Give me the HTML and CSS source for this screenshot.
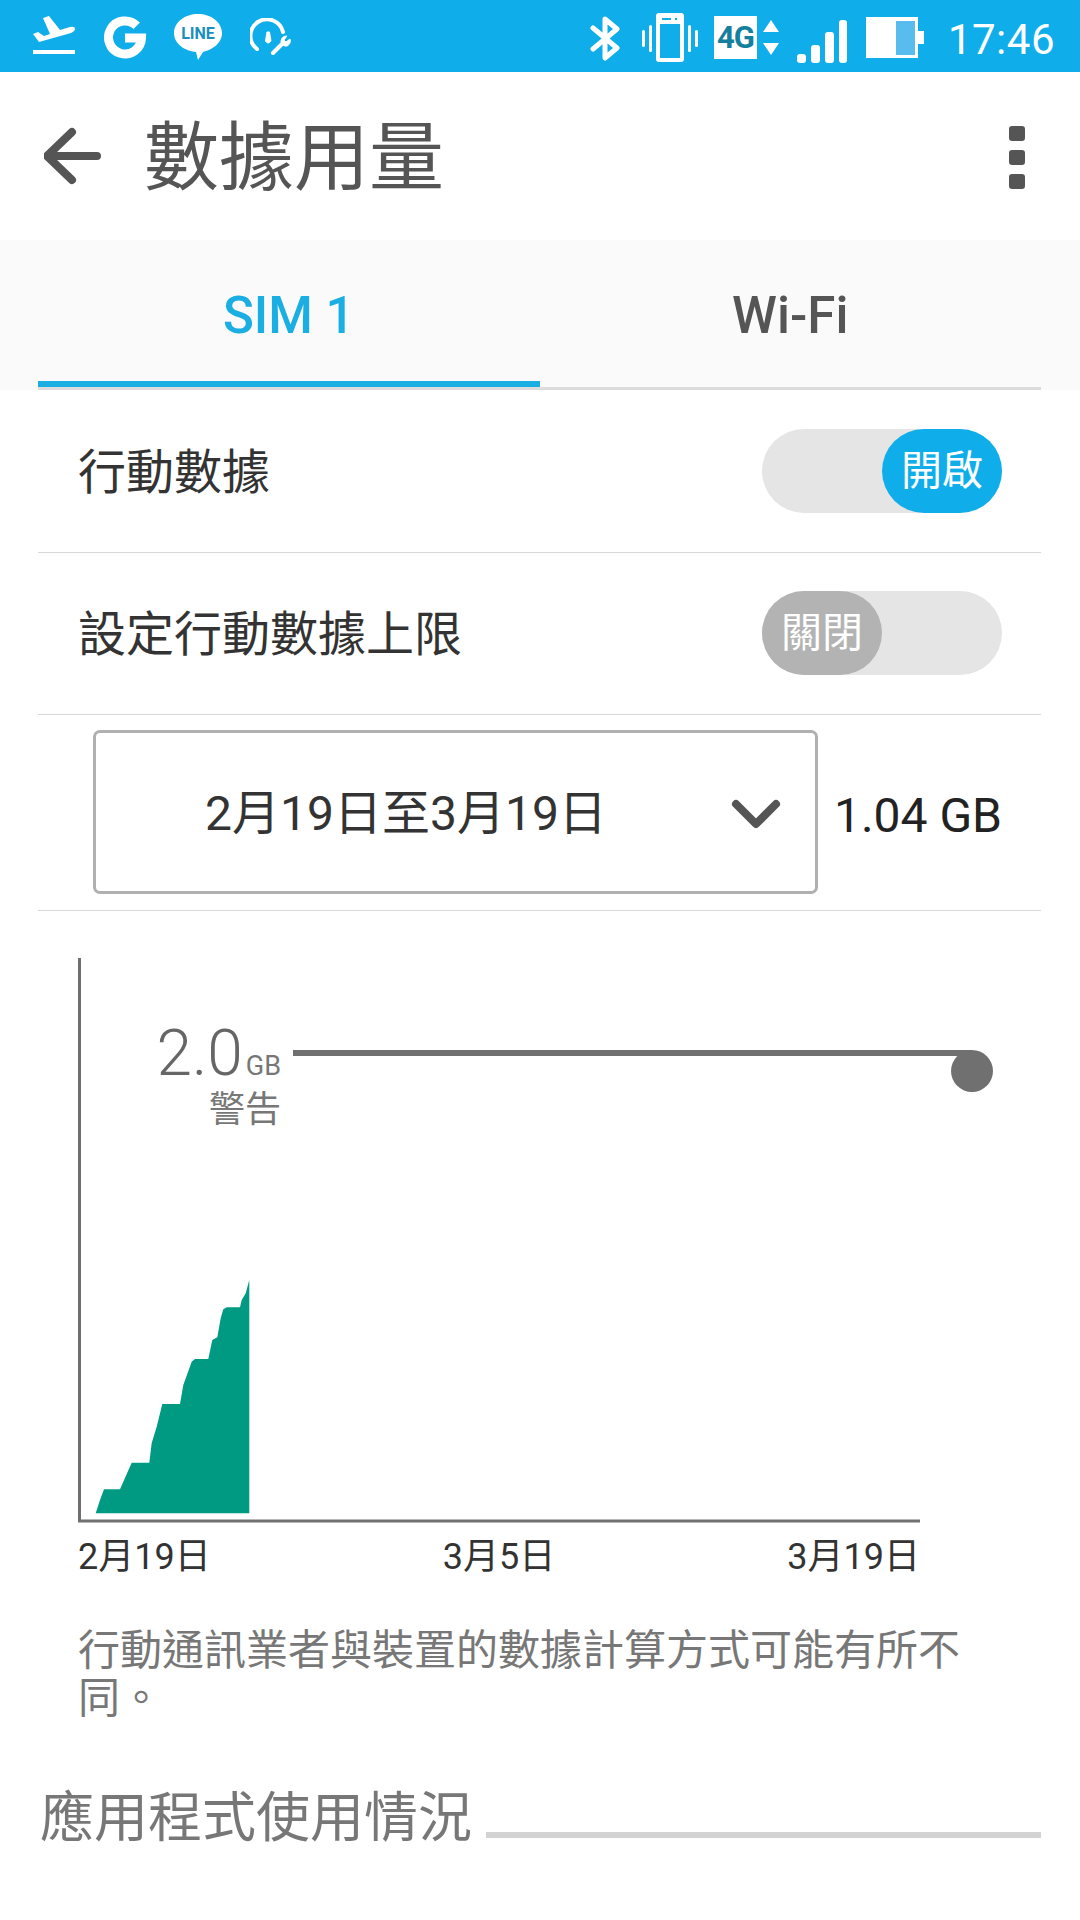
FILE: index.html
```html
<!DOCTYPE html>
<html>
<head>
    <title>數據用量</title>
    <link rel="stylesheet" href="styles.css">
</head>
<body>
    <div class="status-bar">
        <div class="status-left">
            <!-- airplane -->
            <svg class="ic-plane" viewBox="33 14 42 42" fill="#fff">
                <path d="M33 34 L38 32 L44 36 L50 34 L43 18 L49 16 L60 30 L70 27 Q75 26 75 29 Q75 31 71 33 L39 42 Z"/>
                <rect x="33" y="50" width="42" height="4"/>
            </svg>
            <!-- google G -->
            <svg class="ic-g" viewBox="105 15 43 44">
                <path d="M137.700 25.800 A16.500 16.500 0 1 0 142.500 38 H126" fill="none" stroke="#fff" stroke-width="9"/>
            </svg>
            <!-- line bubble -->
            <svg class="ic-line" viewBox="174 14 48 47">
                <path d="M198 14 C211 14 222 22 222 33 C222 44 211 50 203 52 L198 60 L196 52 C185 51 174 44 174 33 C174 22 185 14 198 14 Z" fill="#fff"/>
                <text x="198" y="39" text-anchor="middle" class="line-word">LINE</text>
            </svg>
            <!-- gauge with wrench -->
            <svg class="ic-gauge" viewBox="250 18 41 38" fill="none" stroke="#fff">
                <path d="M257 49 A16.500 16.500 0 1 1 283 32" stroke-width="4" stroke-linecap="round"/>
                <path d="M265.500 41 L267 32 L269.500 32 L271 41 Q268 45 265.500 41 Z" fill="#fff" stroke-width="1"/>
                <path d="M273 53 L283 43" stroke-width="4" stroke-linecap="round"/>
                <path d="M281 41 A5 5 0 0 0 287 46 A6 6 0 0 0 290 39 L286 42 L284 40 L287 36 A6 6 0 0 0 281 41 Z" fill="#fff" stroke-width="1"/>
            </svg>
        </div>
        <div class="status-right">
            <!-- bluetooth -->
            <svg class="ic-bt" viewBox="592 16 30 45" fill="none" stroke="#fff" stroke-width="5">
                <path d="M595 28 L619 48 L607 58 V19 L619 29 L595 49" stroke-linejoin="round" stroke-linecap="round"/>
            </svg>
            <!-- vibrate -->
            <svg class="ic-vib" viewBox="643 13 57 49" fill="#fff">
                <path fill-rule="evenodd" d="M660 13 H682 Q685 13 685 16 V59 Q685 62 682 62 H660 Q657 62 657 59 V16 Q657 13 660 13 Z M661 24 V58 H681 V24 Z"/>
                <rect x="663" y="18" width="9" height="2" fill="#0faeeb"/>
                <rect x="676" y="18" width="2" height="2" fill="#0faeeb"/>
                <rect x="643" y="30" width="3" height="17" rx="1.500"/>
                <rect x="650" y="25" width="3" height="27" rx="1.500"/>
                <rect x="689" y="25" width="3" height="27" rx="1.500"/>
                <rect x="696" y="30" width="3" height="17" rx="1.500"/>
            </svg>
            <div class="net-box">4G</div>
            <svg class="ic-arrows" viewBox="763 19 19 38" fill="#fff">
                <path d="M772 20 L780 32 H764 Z M764 43 H780 L772 55 Z"/>
            </svg>
            <svg class="ic-signal" viewBox="798 19 50 44" fill="#fff">
                <rect x="798" y="54" width="9" height="9" rx="3"/>
                <rect x="812" y="45" width="9" height="18" rx="3"/>
                <rect x="826" y="32" width="9" height="31" rx="3"/>
                <rect x="840" y="20" width="8" height="43" rx="3"/>
            </svg>
            <svg class="ic-batt" viewBox="867 17 59 42" fill="#fff">
                <path d="M867 17 H919 V31 H925 V44 H919 V58 H867 Z"/>
                <rect x="897" y="21" width="19" height="34" fill="#58bdee"/>
            </svg>
            <span class="clock">17:46</span>
        </div>
    </div>

    <div class="toolbar">
        <svg class="back" viewBox="0 0 58 60" fill="none" stroke="#555" stroke-width="8" stroke-linecap="round" stroke-linejoin="round">
            <path d="M28 5 L3 29 L28 53 M3 29 H53"/>
        </svg>
        <div class="title">數據用量</div>
        <div class="menu">
            <span></span>
            <span></span>
            <span></span>
        </div>
    </div>

    <div class="tabs">
        <div class="tab active">SIM 1</div>
        <div class="tab">Wi-Fi</div>
    </div>

    <div class="list">
        <div class="row">
            <span class="label">行動數據</span>
            <div class="toggle on"><span class="knob">開啟</span></div>
        </div>
        <div class="row">
            <span class="label">設定行動數據上限</span>
            <div class="toggle"><span class="knob">關閉</span></div>
        </div>
        <div class="row date-row">
            <div class="select">
                <span class="range">2月19日至3月19日</span>
                <svg class="chevron" viewBox="0 0 50 30" fill="none" stroke="#555" stroke-width="8" stroke-linecap="round" stroke-linejoin="round">
                    <path d="M5 5 L25 25 L45 5"/>
                </svg>
            </div>
            <span class="total">1.04 GB</span>
        </div>
    </div>

    <div class="chart">
        <svg class="plot" viewBox="0 -2 1080 640">
            <path d="M95.700 553.300 L100 540 L104 529.300 H120 L131.700 502.700 H149.300 L151.700 483 L156.700 466.700 L162.300 444 H180 L183.300 425 L191.700 401.700 L195 399 H208.300 L212.300 380 L217.300 377.300 L220.700 358.300 L223.300 349.300 L226.700 347.300 H240 L241.700 340 L245.700 333.300 L249.300 320 V553.300 Z" fill="#009a83"/>
            <path d="M79.500 -2 V561 H920" fill="none" stroke="#707070" stroke-width="3"/>
            <rect x="293" y="90" width="679" height="6" fill="#707070"/>
            <circle cx="972" cy="111" r="21" fill="#707070"/>
        </svg>
        <div class="limit">
            <div><span class="limit-num">2.0</span><span class="limit-unit">GB</span></div>
            <div class="limit-word">警告</div>
        </div>
        <div class="dates">
            <span>2月19日</span>
            <span>3月5日</span>
            <span>3月19日</span>
        </div>
    </div>

    <p class="note">行動通訊業者與裝置的數據計算方式可能有所不同。</p>

    <div class="section">
        <span>應用程式使用情況</span>
        <div class="section-line"></div>
    </div>
</body>
</html>
```

FILE: styles.css
```css
* {
    box-sizing: border-box;
}
body {
    margin: 0;
    width: 1080px;
    height: 1920px;
    overflow: hidden;
    background-color: #fff;
    font-family: Roboto, "Noto Sans CJK TC", sans-serif;
    color: #333;
}
svg {
    display: block;
    flex: none;
}

/* status bar */
.status-bar {
    height: 72px;
    background-color: #0faeeb;
    display: flex;
    align-items: flex-start;
    justify-content: space-between;
}
.status-left,
.status-right {
    display: flex;
    align-items: flex-start;
}
.status-left {
    padding-left: 33px;
}
.ic-plane { width: 42px; height: 42px; margin-top: 14px; }
.ic-g { width: 43px; height: 44px; margin: 15px 0 0 29px; }
.ic-line { width: 48px; height: 47px; margin: 14px 0 0 27px; }
.ic-gauge { width: 41px; height: 38px; margin: 18px 0 0 28px; }
.line-word {
    font-size: 16px;
    font-weight: 700;
    fill: #1a8fc0;
}
.status-right {
    padding-right: 25px;
}
.ic-bt { width: 30px; height: 45px; margin-top: 16px; }
.ic-vib { width: 57px; height: 49px; margin: 13px 0 0 22px; }
.net-box {
    width: 43px;
    height: 43px;
    margin: 16px 0 0 15px;
    background-color: #fff;
    color: #15809e;
    font-size: 31px;
    font-weight: 700;
    line-height: 43px;
    letter-spacing: -1px;
    text-align: center;
}
.ic-arrows { width: 19px; height: 38px; margin: 19px 0 0 5px; }
.ic-signal { width: 50px; height: 44px; margin: 19px 0 0 16px; }
.ic-batt { width: 59px; height: 42px; margin: 17px 0 0 19px; }
.clock {
    margin-left: 23px;
    color: #fff;
    font-size: 42px;
    line-height: 79px;
    letter-spacing: 0.5px;
}

/* toolbar */
.toolbar {
    height: 168px;
    display: flex;
    align-items: center;
    padding-left: 44px;
}
.back {
    width: 58px;
    height: 60px;
    margin-top: 2px;
}
.title {
    margin: 0 0 9px 42px;
    font-size: 75px;
    color: #555;
    flex: 1;
}
.menu {
    display: flex;
    flex-direction: column;
    gap: 9px;
    margin: 3px 55px 0 0;
}
.menu span {
    width: 16px;
    height: 15px;
    border-radius: 3px;
    background-color: #555;
}

/* tabs */
.tabs {
    height: 150px;
    padding: 0 39px 0 38px;
    background-color: #fafafa;
    display: flex;
}
.tab {
    width: 502px;
    height: 150px;
    font-size: 51px;
    font-weight: 500;
    color: #555;
    text-align: center;
    line-height: 152px;
    border-bottom: 3px solid #dcdcdc;
}
.tab.active {
    color: #1aaee2;
    box-shadow: inset 0 -6px 0 #1aaee2;
}

/* list rows */
.list {
    padding: 1px 39px 0 38px;
}
.row {
    height: 162px;
    padding: 0 39px 0 40px;
    display: flex;
    align-items: center;
    justify-content: space-between;
    border-bottom: 1px solid #d8d8d8;
}
.label {
    margin-bottom: 8px;
    font-size: 48px;
    color: #333;
}
.toggle {
    width: 240px;
    height: 84px;
    margin-bottom: 2px;
    border-radius: 42px;
    background-color: #e5e5e5;
    display: flex;
}
.toggle.on {
    justify-content: flex-end;
}
.knob {
    width: 120px;
    height: 84px;
    border-radius: 42px;
    background-color: #b3b3b3;
    color: #fff;
    font-size: 41px;
    line-height: 84px;
    text-align: center;
}
.toggle.on .knob {
    background-color: #0faeeb;
}
.date-row {
    height: 196px;
    padding-left: 55px;
}
.select {
    width: 725px;
    height: 164px;
    margin-bottom: 2px;
    border: 3px solid #b0b0b0;
    border-radius: 7px;
    padding: 0 34px 0 109px;
    display: flex;
    align-items: center;
    justify-content: space-between;
}
.range {
    margin-bottom: 6px;
    font-size: 48px;
}
.chevron {
    width: 50px;
    height: 30px;
    margin-top: 4px;
}
.total {
    margin-top: 5px;
    font-size: 48px;
    color: #222;
}

/* chart */
.chart {
    position: relative;
    height: 640px;
    margin-top: 47px;
}
.plot {
    width: 1080px;
    height: 640px;
}
.limit {
    position: absolute;
    left: 100px;
    top: 60px;
    width: 181px;
    text-align: right;
    color: #777;
}
.limit-num {
    font-size: 64px;
    font-weight: 300;
    line-height: 72px;
    color: #666;
}
.limit-unit {
    margin-left: 3px;
    font-size: 27px;
}
.limit-word {
    font-size: 36px;
    line-height: 40px;
}
.dates {
    position: absolute;
    left: 78px;
    top: 569px;
    width: 842px;
    display: flex;
    justify-content: space-between;
    font-size: 36px;
}

/* note + section */
.note {
    margin: 29px 0 0;
    padding: 0 78px;
    font-size: 42px;
    line-height: 48px;
    color: #777;
}
.section {
    margin-top: 51px;
    padding: 0 39px 0 40px;
    display: flex;
    align-items: center;
    gap: 14px;
    font-size: 54px;
    color: #777;
}
.section-line {
    flex: 1;
    height: 6px;
    margin-top: 42px;
    background-color: #d3d3d3;
}
```
